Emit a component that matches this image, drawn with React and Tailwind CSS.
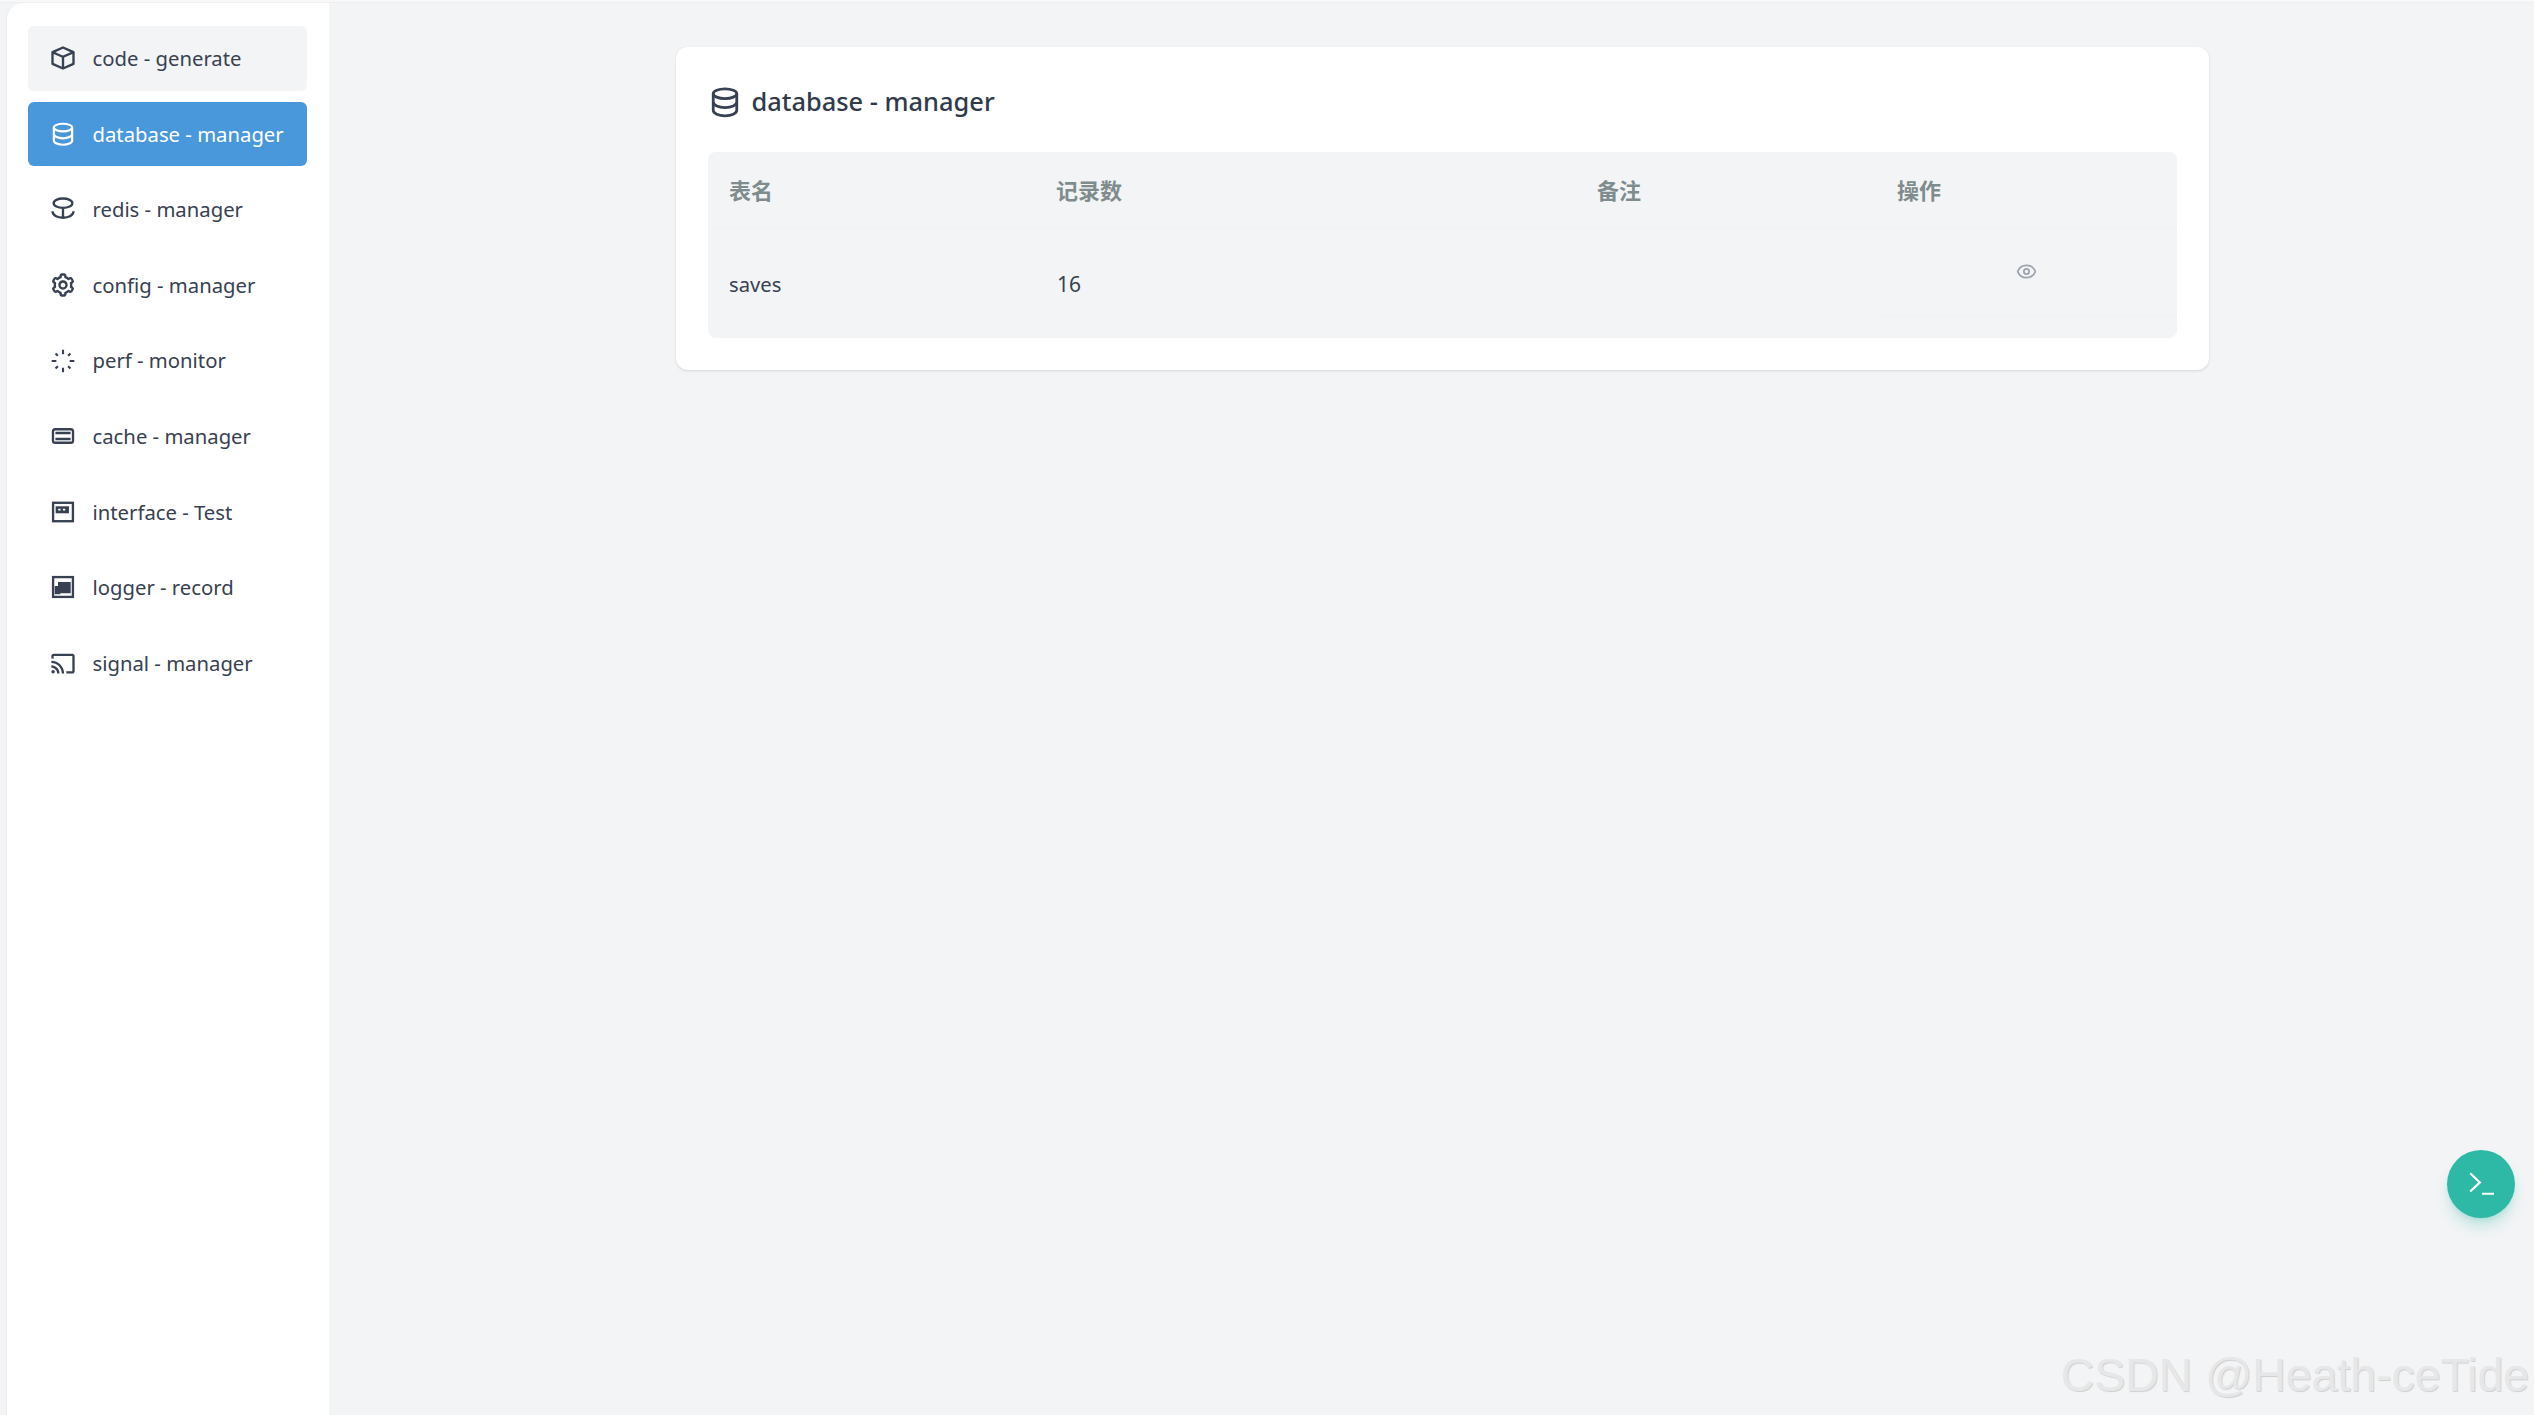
import React from 'react';
import { BiCube, BiCog, BiCast } from 'react-icons/bi';
import { Eye } from 'lucide-react';

// icons the packages don't have, drawn by hand
function DatabaseIcon({ className }) {
  return (
    <svg viewBox="-1 -1 26 26" fill="none" stroke="currentColor" strokeWidth="2" className={className}>
      <ellipse cx="12" cy="6" rx="8.500" ry="3.500" />
      <path d="M3.500 6v12c0 2.200 3.800 4 8.500 4s8.500-1.800 8.500-4V6" />
      <path d="M3.500 12c0 2.200 3.800 4 8.500 4s8.500-1.800 8.500-4" />
    </svg>
  );
}

function RedisIcon({ className }) {
  return (
    <svg viewBox="0 0 24 24" fill="none" stroke="currentColor" strokeWidth="2" className={className}>
      <ellipse cx="12" cy="7" rx="8" ry="4" />
      <path d="M12 11v8.500M3 14c0 3.500 4 5.500 9 5.500s9-2 9-5.500" />
    </svg>
  );
}

function LoaderIcon({ className }) {
  return (
    <svg viewBox="0 0 24 24" fill="none" stroke="currentColor" strokeWidth="1.800" className={className}>
      <path d="M12 2.300v4M12 17.700v4M2.300 12h4M17.700 12h4" />
      <path d="M5.600 5.600l2 2M16.400 16.400l2 2M18.400 5.600l-2 2M7.600 16.400l-2 2" />
    </svg>
  );
}

function CacheIcon({ className }) {
  return (
    <svg viewBox="0 0 24 24" fill="none" stroke="currentColor" strokeWidth="2" className={className}>
      <rect x="3.400" y="6.200" width="17.200" height="11.600" rx="2" />
      <path d="M5.500 9.400h13M5.500 14.600h13" />
    </svg>
  );
}

function InterfaceIcon({ className }) {
  return (
    <svg viewBox="0 0 24 24" fill="none" stroke="currentColor" strokeWidth="2" className={className}>
      <rect x="3.500" y="4.100" width="17" height="15.800" />
      <path d="M5.700 7.100h11.400v6H5.700z" fill="currentColor" stroke="none" />
      <path d="M7.900 10h2M11.900 10h2" stroke="#fff" strokeWidth="1.500" />
    </svg>
  );
}

function LoggerIcon({ className }) {
  return (
    <svg viewBox="0 0 24 24" fill="none" stroke="currentColor" strokeWidth="2" className={className}>
      <rect x="3.500" y="3.500" width="17" height="17" />
      <path d="M7.700 7.700H18.600V17.400H9.700V18.300H4.900V11.100H7.700z" fill="currentColor" stroke="none" />
    </svg>
  );
}

const menu = [
  { name: 'code - generate', icon: BiCube, hover: true },
  { name: 'database - manager', icon: DatabaseIcon, active: true },
  { name: 'redis - manager', icon: RedisIcon },
  { name: 'config - manager', icon: BiCog },
  { name: 'perf - monitor', icon: LoaderIcon },
  { name: 'cache - manager', icon: CacheIcon },
  { name: 'interface - Test', icon: InterfaceIcon },
  { name: 'logger - record', icon: LoggerIcon },
  { name: 'signal - manager', icon: BiCast },
];

function MenuItem({ item }) {
  const Icon = item.icon;
  let tone = 'text-[#374151]';
  if (item.active) tone = 'bg-[#4a98dc] text-white';
  if (item.hover) tone = 'bg-[#f3f4f6] text-[#374151]';
  return (
    <div className={`flex h-[64.6px] items-center rounded-md pl-[20.500px] ${tone}`}>
      <Icon className="h-7 w-7 shrink-0" />
      <span className="ml-[16px] text-[20.300px]">{item.name}</span>
    </div>
  );
}

export default function App() {
  return (
    <div className="relative flex h-screen w-full flex-col overflow-hidden bg-[#f3f4f6] font-['Noto_Sans','Noto_Sans_CJK_SC',sans-serif] text-[#374151]">
      <div className="h-[3px] shrink-0 border-b border-[#eeeeee] bg-[#f8f8f8]" />
      <div className="flex min-h-0 flex-1 pl-[6px]">
        <aside className="flex w-[323px] shrink-0 flex-col gap-[11px] rounded-tl-2xl border-l border-[#e9eaec] bg-white pt-[23px] pr-[22px] pl-[21px]">
          {menu.map((item) => (
            <MenuItem key={item.name} item={item} />
          ))}
        </aside>

        <main className="flex-1 pt-[44px] pl-[347px]">
          <section className="w-[1533px] rounded-xl bg-white p-8 pt-[36px] shadow-sm">
            <h2 className="flex h-[37px] items-center text-[25.400px] font-medium text-[#2f3a4a]">
              <DatabaseIcon className="mr-[7.500px] h-[36px] w-[36px] -translate-x-px text-[#374151]" />
              database - manager
            </h2>
            <table className="mt-[32px] w-[1469px] table-fixed overflow-hidden rounded-lg bg-[#f3f4f6] text-[20.200px]">
              <thead>
                <tr className="h-[76px] border-b border-[#f0f1f3] text-left text-[22px] text-[#7f8c8d]">
                  <th className="w-[327px] pt-[2px] pl-[21px] font-bold">表名</th>
                  <th className="w-[541px] pt-[2px] pl-[21px] font-bold">记录数</th>
                  <th className="w-[300px] pt-[2px] pl-[21px] font-bold">备注</th>
                  <th className="pt-[2px] pl-[21px] font-bold">操作</th>
                </tr>
              </thead>
              <tbody>
                <tr className="h-[110px]">
                  <td className="pt-[2px] pl-[21px]">saves</td>
                  <td className="pt-[2px] pl-[22px] text-[21px]">16</td>
                  <td />
                  <td className="h-[110px] align-top">
                    <div className="flex h-[87px] items-center justify-center border-b border-[#f0f1f3]">
                      <Eye className="h-[21px] w-[21px] text-[#9ca3af]" />
                    </div>
                  </td>
                </tr>
              </tbody>
            </table>
          </section>
        </main>
      </div>

      <button className="absolute right-[19px] bottom-[197px] flex h-[68px] w-[68px] items-center justify-center rounded-full bg-[#2eb8a6] text-white shadow-lg shadow-[#2eb8a6]/30">
        <svg viewBox="0 0 24 24" fill="none" stroke="currentColor" strokeWidth="2" className="h-[26px] w-[26px]">
          <path d="M2 2l9 8.500-9 8.500M13 21h11" />
        </svg>
      </button>

      <span className="absolute right-[5px] bottom-[17px] font-['Liberation_Sans',sans-serif] text-[46.400px] leading-none text-[#e6e7e9] [text-shadow:1px_1px_1px_#cfcfcf]">
        CSDN @Heath-ceTide
      </span>
    </div>
  );
}
